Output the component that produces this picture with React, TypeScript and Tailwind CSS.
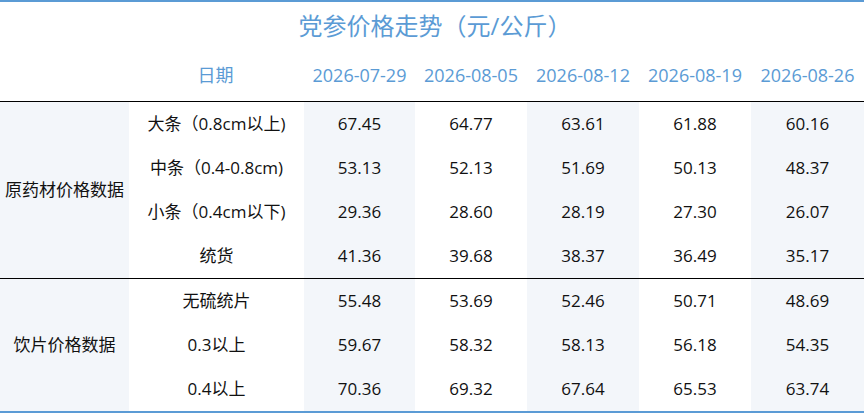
import React from "react";

const cols = "grid grid-cols-[129px_175px_111px_112px_112px_112px_113px]";
const dates = ["2026-07-29", "2026-08-05", "2026-08-12", "2026-08-19", "2026-08-26"];

const group1 = {
  name: "原药材价格数据",
  rows: [
    { label: "大条（0.8cm以上)", v: ["67.45", "64.77", "63.61", "61.88", "60.16"] },
    { label: "中条（0.4-0.8cm)", v: ["53.13", "52.13", "51.69", "50.13", "48.37"] },
    { label: "小条（0.4cm以下)", v: ["29.36", "28.60", "28.19", "27.30", "26.07"] },
    { label: "统货", v: ["41.36", "39.68", "38.37", "36.49", "35.17"] },
  ],
};
const group2 = {
  name: "饮片价格数据",
  rows: [
    { label: "无硫统片", v: ["55.48", "53.69", "52.46", "50.71", "48.69"] },
    { label: "0.3以上", v: ["59.67", "58.32", "58.13", "56.18", "54.35"] },
    { label: "0.4以上", v: ["70.36", "69.32", "67.64", "65.53", "63.74"] },
  ],
};

function Group({ g, rowsClass }: { g: typeof group1; rowsClass: string }) {
  const span = g.rows.length === 4 ? "row-span-4" : "row-span-3";
  return (
    <div className={`${cols} ${rowsClass}`}>
      <div className={`${span} col-start-1 row-start-1 bg-[#f3f6fa] flex items-center justify-center`}>{g.name}</div>
      {g.rows.map((r, i) => (
        <React.Fragment key={i}>
          <div className="col-start-2 flex items-center justify-center">{r.label}</div>
          {r.v.map((v, j) => (
            <div
              key={j}
              className={`flex items-center justify-center ${j % 2 === 0 ? "bg-[#f3f6fa]" : "bg-white"}`}
            >
              {v}
            </div>
          ))}
        </React.Fragment>
      ))}
    </div>
  );
}

export default function App() {
  return (
    <div
      className="w-[865px] h-[414px] bg-white text-[17px] text-[#111] overflow-hidden"
      style={{ fontFamily: '"Open Sans", "Noto Sans CJK SC", sans-serif' }}
    >
      <div className="w-[864px] border-t-2 border-b-2 border-[#5b9bd5]">
        <div className="h-[48px] flex items-center justify-center pl-[6px] text-[24px] text-[#5b9bd5]">
          党参价格走势（元/公斤）
        </div>
        <div className={`${cols} h-[52px] text-[18px] text-[#5b9bd5] border-b border-black`}>
          <div />
          <div className="flex items-center justify-center pr-[2px]">日期</div>
          {dates.map((d) => (
            <div key={d} className="flex items-center justify-center">
              {d}
            </div>
          ))}
        </div>
        <div className="border-b border-black">
          <Group g={group1} rowsClass="grid-rows-[repeat(4,44px)]" />
        </div>
        <Group g={group2} rowsClass="grid-rows-[repeat(3,44px)]" />
      </div>
    </div>
  );
}
